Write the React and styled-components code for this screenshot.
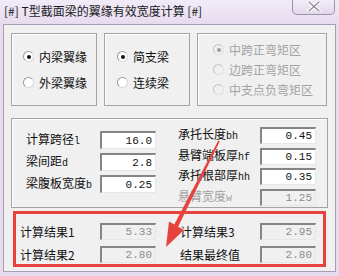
import styled, { createGlobalStyle } from "styled-components";

const Global = createGlobalStyle`
  html, body { margin: 0; padding: 0; background: #e8e0ef; }
  body { font-family: "Noto Sans CJK SC", "Liberation Sans", sans-serif; }
`;

const CJK = `"Noto Sans CJK SC", "Liberation Sans", sans-serif`;
const MONO = `"Liberation Mono", "DejaVu Sans Mono", monospace`;

function Radio({ label, checked, disabled }) {
  return (
    <RadioRow $disabled={disabled}>
      <Dot $checked={checked} $disabled={disabled} />
      <span>{label}</span>
    </RadioRow>
  );
}

function Field({ label, suffix, value, disabled, result, labelWidth, height = 18 }) {
  return (
    <FieldRow $h={height}>
      <Label $w={labelWidth} $disabled={disabled}>
        {label}
        {suffix && <Suffix>{suffix}</Suffix>}
      </Label>
      <Box $grey={disabled || result}>{value}</Box>
    </FieldRow>
  );
}

function App() {
  return (
    <>
      <Global />
      <Window>
        <TitleBar>
          <Title>[#] T型截面梁的翼缘有效宽度计算 [#]</Title>
          <CloseBtn>
            <svg width="14" height="11" viewBox="0 0 14 11">
              <path d="M2 1 L12 10 M12 1 L2 10" stroke="#fff" strokeWidth="3.4" strokeLinecap="round" />
              <path d="M2 1 L12 10 M12 1 L2 10" stroke="#8d8499" strokeWidth="1.2" strokeLinecap="round" />
            </svg>
          </CloseBtn>
        </TitleBar>
        <Client>
          <TopRow>
            <Group $w={86} $gap={12}>
              <Radio label="内梁翼缘" checked />
              <Radio label="外梁翼缘" />
            </Group>
            <Group $w={86} $gap={12} $pl={12}>
              <Radio label="简支梁" checked />
              <Radio label="连续梁" />
            </Group>
            <Group $w={130} $gap={6} $pl={15}>
              <Radio label="中跨正弯矩区" checked disabled />
              <Radio label="边跨正弯矩区" disabled />
              <Radio label="中支点负弯矩区" disabled />
            </Group>
          </TopRow>
          <InputPanel>
            <Column $gap={4} $pt={12}>
              <Field label="计算跨径" suffix="l" value="16.0" labelWidth={74} />
              <Field label="梁间距" suffix="d" value="2.8" labelWidth={74} />
              <Field label="梁腹板宽度" suffix="b" value="0.25" labelWidth={74} />
            </Column>
            <Column $gap={3.6} $pt={8} $ml={22}>
              <Field label="承托长度" suffix="bh" value="0.45" labelWidth={82} height={17} />
              <Field label="悬臂端板厚" suffix="hf" value="0.15" labelWidth={82} height={17} />
              <Field label="承托根部厚" suffix="hh" value="0.35" labelWidth={82} height={17} />
              <Field label="悬臂宽度" suffix="w" value="1.25" labelWidth={82} height={17} disabled />
            </Column>
          </InputPanel>
          <ResultPanel>
            <Column $gap={6} $pt={0}>
              <Field label="计算结果1" value="5.33" labelWidth={80} height={17} result />
              <Field label="计算结果2" value="2.80" labelWidth={80} height={17} result />
            </Column>
            <Column $gap={6} $pt={0} $ml={24}>
              <Field label="计算结果3" value="2.95" labelWidth={80} height={17} result />
              <Field label="结果最终值" value="2.80" labelWidth={80} height={17} result />
            </Column>
          </ResultPanel>
        </Client>
        <Arrow width="339" height="276" viewBox="0 0 339 276">
          <polygon
            points="218.3,140.6 219.7,141.4 178,227 174,225"
            fill="#e8423f"
          />
          <polygon points="166,247 169,221.5 184,230" fill="#e8423f" />
        </Arrow>
      </Window>
    </>
  );
}

export default App;

const Window = styled.div`
  position: relative;
  width: 339px;
  height: 276px;
  box-sizing: border-box;
  background: linear-gradient(#f1eaf7, #e6dcee 24px, #e6dcee);
  display: flex;
  flex-direction: column;
  overflow: hidden;
`;

const TitleBar = styled.div`
  height: 24px;
  display: flex;
  justify-content: space-between;
  align-items: flex-start;
  padding: 0 4px 0 4px;
  box-sizing: border-box;
`;

const Title = styled.div`
  font-family: ${CJK};
  font-size: 12px;
  line-height: 12px;
  color: #1a1a1a;
  margin-top: 5px;
`;

const CloseBtn = styled.div`
  width: 43px;
  height: 16px;
  margin-top: -1px;
  box-sizing: border-box;
  border: 1px solid #9d93ab;
  border-top: none;
  border-radius: 0 0 5px 5px;
  background: linear-gradient(#f3eef8, #e2d8ec);
  display: flex;
  align-items: center;
  justify-content: center;
`;

const Client = styled.div`
  margin: 0 3px;
  height: 248px;
  box-sizing: border-box;
  background: #f0f0f0;
  border: 1px solid #a79eb4;
  padding: 8px 7px 0 7px;
  display: flex;
  flex-direction: column;
`;

const TopRow = styled.div`
  display: flex;
  gap: 7px;
`;

const Group = styled.div`
  width: ${(p) => p.$w}px;
  height: 73px;
  box-sizing: border-box;
  border: 1px solid #a3a3a3;
  box-shadow: inset 1px 1px 0 #fff;
  display: flex;
  flex-direction: column;
  justify-content: center;
  gap: ${(p) => p.$gap}px;
  padding-left: ${(p) => p.$pl ?? 11}px;
`;

const RadioRow = styled.div`
  display: flex;
  align-items: center;
  gap: 5px;
  height: 14px;
  font-family: ${CJK};
  font-size: 12px;
  color: ${(p) => (p.$disabled ? "#a3a3a3" : "#111")};
`;

const Dot = styled.span`
  width: 11px;
  height: 11px;
  box-sizing: border-box;
  border-radius: 50%;
  border: 1px solid ${(p) => (p.$disabled ? "#c2c2c2" : "#9a9a9a")};
  border-right-color: ${(p) => (p.$disabled ? "#e0e0e0" : "#d8d8d8")};
  border-bottom-color: ${(p) => (p.$disabled ? "#e0e0e0" : "#d8d8d8")};
  background: ${(p) => (p.$disabled ? "#f0f0f0" : "#fff")};
  display: flex;
  align-items: center;
  justify-content: center;
  &::after {
    content: "";
    display: ${(p) => (p.$checked ? "block" : "none")};
    width: 4px;
    height: 4px;
    border-radius: 50%;
    background: ${(p) => (p.$disabled ? "#9c9c9c" : "#111")};
  }
`;

const InputPanel = styled.div`
  margin-top: 12px;
  height: 90px;
  box-sizing: border-box;
  border: 1px solid #a3a3a3;
  box-shadow: inset 1px 1px 0 #fff;
  display: flex;
  padding-left: 14px;
`;

const ResultPanel = styled.div`
  margin: 3px 0 0 2px;
  width: 313px;
  height: 56px;
  box-sizing: border-box;
  border: 3px solid #e8423f;
  display: flex;
  padding: 9px 0 0 4px;
`;

const Column = styled.div`
  display: flex;
  flex-direction: column;
  gap: ${(p) => p.$gap}px;
  padding-top: ${(p) => p.$pt}px;
  margin-left: ${(p) => p.$ml ?? 0}px;
`;

const FieldRow = styled.div`
  display: flex;
  align-items: center;
  height: ${(p) => p.$h}px;
`;

const Label = styled.div`
  width: ${(p) => p.$w}px;
  font-family: ${CJK};
  font-size: 12px;
  line-height: 14px;
  white-space: nowrap;
  color: ${(p) => (p.$disabled ? "#a3a3a3" : "#111")};
`;

const Suffix = styled.span`
  font-family: ${MONO};
  font-size: 10px;
`;

const Box = styled.div`
  width: 56px;
  height: 100%;
  box-sizing: border-box;
  border-style: solid;
  border-width: 2px 1px 1px 2px;
  border-color: #858585 #e6e6e6 #e6e6e6 #858585;
  background: ${(p) => (p.$grey ? "#f0f0f0" : "#fff")};
  color: ${(p) => (p.$grey ? "#8c8c8c" : "#111")};
  font-family: ${MONO};
  font-size: 11px;
  text-align: right;
  padding-right: 3px;
  display: flex;
  align-items: center;
  justify-content: flex-end;
`;

const Arrow = styled.svg`
  position: absolute;
  left: 0;
  top: 0;
  pointer-events: none;
`;
